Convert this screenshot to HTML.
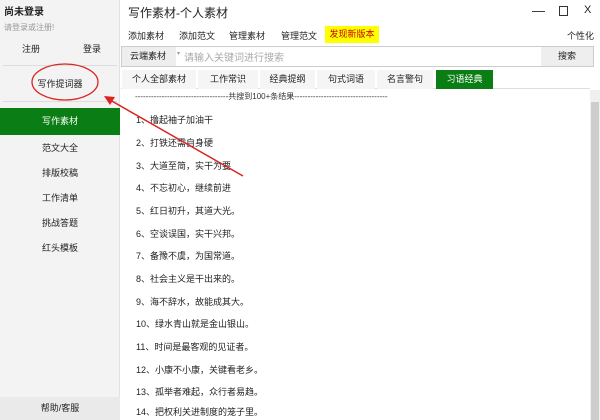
<!DOCTYPE html>
<html><head><meta charset="utf-8"><style>
*{margin:0;padding:0;box-sizing:border-box}
body{width:600px;height:420px;overflow:hidden;background:#fff;font-family:"Liberation Sans","Noto Sans CJK SC",sans-serif;font-size:9px;color:#222;position:relative}
.a{position:absolute;white-space:nowrap}
#left{position:absolute;left:0;top:0;width:120px;height:420px;background:#f3f3f3;border-right:1px solid #e2e2e2}
.m{position:absolute;left:0;width:120px;text-align:center;font-size:9px}
.tab{position:absolute;top:70px;height:19px;line-height:19px;text-align:center;font-size:9px;background:#f5f5f5}
.it{position:absolute;left:136px;font-size:9px}
</style></head><body>
<div id="left">
<div class="a" style="left:4px;top:3px;font-size:10px;font-weight:bold">尚未登录</div>
<div class="a" style="left:4px;top:22px;font-size:8px;color:#999">请登录或注册!</div>
<div class="a" style="left:22px;top:42px">注册</div>
<div class="a" style="left:83px;top:42px">登录</div>
<div class="a" style="left:3px;top:65px;width:114px;border-top:1px solid #ddd"></div>
<div class="m" style="top:77px">写作提词器</div>
<div class="a" style="left:3px;top:101px;width:114px;border-top:1px solid #ddd"></div>
<div class="m" style="top:108px;height:27px;line-height:27px;background:#0a7d14;color:#fff">写作素材</div>
<div class="m" style="top:141px">范文大全</div>
<div class="m" style="top:166px">排版校稿</div>
<div class="m" style="top:191px">工作清单</div>
<div class="m" style="top:216px">挑战答题</div>
<div class="m" style="top:241px">红头模板</div>
<div class="m" style="top:397px;height:23px;line-height:23px;background:#eaeaea">帮助/客服</div>
</div>
<div class="a" style="left:128px;top:4px;font-size:12px">写作素材-个人素材</div>
<div class="a" style="left:532px;top:3px;font-size:13px">—</div>
<div class="a" style="left:559px;top:6px;width:9px;height:10px;border:1px solid #333"></div>
<div class="a" style="left:584px;top:4px;font-size:11px">X</div>
<div class="a" style="left:128px;top:29px">添加素材</div>
<div class="a" style="left:179px;top:29px">添加范文</div>
<div class="a" style="left:229px;top:29px">管理素材</div>
<div class="a" style="left:281px;top:29px">管理范文</div>
<div class="a" style="left:325px;top:26px;width:54px;height:17px;line-height:17px;background:#ffff00;color:#c00;text-align:center">发现新版本</div>
<div class="a" style="left:567px;top:29px">个性化</div>
<div class="a" style="left:121px;top:46px;width:473px;height:21px;border:1px solid #ccc"></div>
<div class="a" style="left:122px;top:47px;width:54px;height:19px;line-height:19px;background:#eee;padding-left:8px">云端素材</div>
<div class="a" style="left:177px;top:50px;font-size:6px;color:#999">▾</div>
<div class="a" style="left:184px;top:49px;font-size:10px;color:#aaa">请输入关键词进行搜索</div>
<div class="a" style="left:541px;top:47px;width:52px;height:19px;line-height:19px;background:#eee;text-align:center">搜索</div>
<div class="a" style="left:121px;top:88px;width:469px;border-top:1px solid #ddd"></div>
<div class="tab" style="left:122px;width:74px">个人全部素材</div>
<div class="tab" style="left:198px;width:60px">工作常识</div>
<div class="tab" style="left:260px;width:55px">经典提纲</div>
<div class="tab" style="left:317px;width:58px">句式词语</div>
<div class="tab" style="left:377px;width:56px">名言警句</div>
<div class="tab" style="left:436px;width:57px;background:#0a7d14;color:#fff">习语经典</div>
<div class="a" style="left:135px;top:91px;font-size:8px;color:#333">-----------------------------------共搜到100+条结果-----------------------------------</div>
<div class="a" style="left:590px;top:90px;width:10px;height:330px;background:#f0f0f0"></div>
<div class="a" style="left:591px;top:102px;width:8px;height:318px;background:#cdcdcd"></div>
<div class="it" style="top:113px">1、撸起袖子加油干</div>
<div class="it" style="top:136px">2、打铁还需自身硬</div>
<div class="it" style="top:159px">3、大道至简，实干为要</div>
<div class="it" style="top:181px">4、不忘初心，继续前进</div>
<div class="it" style="top:204px">5、红日初升，其道大光。</div>
<div class="it" style="top:227px">6、空谈误国，实干兴邦。</div>
<div class="it" style="top:249px">7、备豫不虞，为国常道。</div>
<div class="it" style="top:272px">8、社会主义是干出来的。</div>
<div class="it" style="top:295px">9、海不辞水，故能成其大。</div>
<div class="it" style="top:317px">10、绿水青山就是金山银山。</div>
<div class="it" style="top:340px">11、时间是最客观的见证者。</div>
<div class="it" style="top:363px">12、小康不小康，关键看老乡。</div>
<div class="it" style="top:385px">13、孤举者难起，众行者易趋。</div>
<div class="it" style="top:405px">14、把权利关进制度的笼子里。</div>
<svg class="a" style="left:0;top:0" width="600" height="420">
<ellipse cx="65" cy="82" rx="33" ry="18" fill="none" stroke="#d22" stroke-width="1.3"/>
<line x1="243" y1="176" x2="110" y2="100" stroke="#d22" stroke-width="1.5"/>
<polygon points="104,96 115,97 110,105" fill="#d22"/>
</svg>
</body></html>
